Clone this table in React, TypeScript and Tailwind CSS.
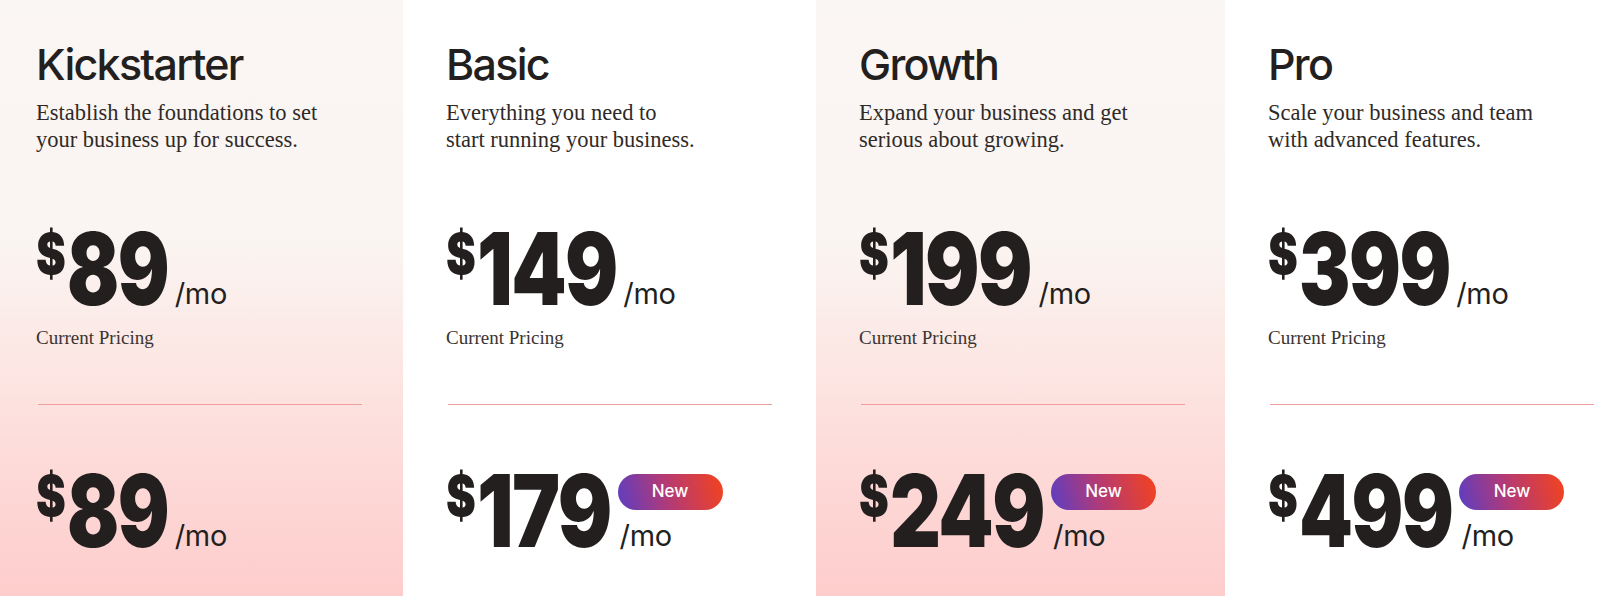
const plans = [
  {
    name: "Kickstarter",
    desc: ["Establish the foundations to set", "your business up for success."],
    current: { amount: "89", fix: "scale-x-[0.77] -mr-[31px]" },
    next: { amount: "89", fix: "scale-x-[0.77] -mr-[31px]" },
    isNew: false,
    tinted: true,
  },
  {
    name: "Basic",
    desc: ["Everything you need to", "start running your business."],
    current: { amount: "149", fix: "scale-x-[0.79] -mr-[38px]" },
    next: { amount: "179", fix: "scale-x-[0.81] -mr-[32px]" },
    isNew: true,
    tinted: false,
  },
  {
    name: "Growth",
    desc: ["Expand your business and get", "serious about growing."],
    current: { amount: "199", fix: "scale-x-[0.81] -mr-[33px]" },
    next: { amount: "249", fix: "scale-x-[0.79] -mr-[41px]" },
    isNew: true,
    tinted: true,
  },
  {
    name: "Pro",
    desc: ["Scale your business and team", "with advanced features."],
    current: { amount: "399", fix: "scale-x-[0.77] -mr-[46px]" },
    next: { amount: "499", fix: "scale-x-[0.77] -mr-[46px]" },
    isNew: true,
    tinted: false,
  },
];

// digits are squeezed with scale-x; `fix` holds the squeeze and gives back the width it leaves behind
const Price = ({ amount, fix, isNew }: { amount: string; fix: string; isNew?: boolean }) => {
  return (
    <div className="flex items-stretch text-[#231f1e]">
      <span className="font-['Inter',sans-serif] font-black text-[56px] leading-[46px] inline-block origin-left scale-x-[0.8] -mr-[8px] mt-[-1px]">
        $
      </span>
      <span
        className={
          "font-['Inter',sans-serif] font-black text-[100px] leading-[74px] tracking-[-0.02em] inline-block origin-left ml-[2px] " +
          fix
        }
      >
        {amount}
      </span>
      <div className="flex flex-col justify-between items-start ml-[7px]">
        {isNew ? (
          <span className="w-[105px] h-[36px] rounded-full bg-[linear-gradient(75deg,#5b3ec2_0%,#b13a78_45%,#f4431c_100%)] text-white font-['Inter',sans-serif] font-medium text-[17px] flex items-center justify-center">
            New
          </span>
        ) : (
          <span />
        )}
        <span className={"font-['Inter',sans-serif] text-[29px] leading-[24px] tracking-[-0.01em] " + (isNew ? "ml-[2px]" : "")}>
          /mo
        </span>
      </div>
    </div>
  );
};

const App = () => {
  return (
    <div className="h-[596px] w-[1602px] overflow-hidden bg-white grid grid-cols-[403px_413px_409px_377px]">
      {plans.map((p, i) => (
        <div
          key={p.name}
          className={
            (p.tinted
              ? "bg-[linear-gradient(180deg,#faf6f3_0%,#faf5f2_40%,#fce7e4_60%,#fdd9d7_80%,#fdcdcc_100%)] "
              : "bg-white ") + (i === 0 ? "pl-[36px]" : "pl-[43px]")
          }
        >
          <h2 className="mt-[43px] font-['Inter',sans-serif] font-medium text-[43px] leading-[43px] tracking-[-0.04em] text-[#231f1e]">
            {p.name}
          </h2>
          <p className="mt-[13px] font-['Liberation_Serif',serif] text-[22.5px] leading-[27px] text-[#2f2a28]">
            {p.desc[0]}
            <br />
            {p.desc[1]}
          </p>
          <div className="mt-[79px]">
            <Price amount={p.current.amount} fix={p.current.fix} />
          </div>
          <p className="mt-[20px] font-['Liberation_Serif',serif] text-[19px] leading-[24px] text-[#3a3432]">
            Current Pricing
          </p>
          <div className="mt-[54px] ml-[2px] w-[324px] h-px bg-[#ee9c9c]" />
          <div className="mt-[69px]">
            <Price amount={p.next.amount} fix={p.next.fix} isNew={p.isNew} />
          </div>
        </div>
      ))}
    </div>
  );
};

export default App;
